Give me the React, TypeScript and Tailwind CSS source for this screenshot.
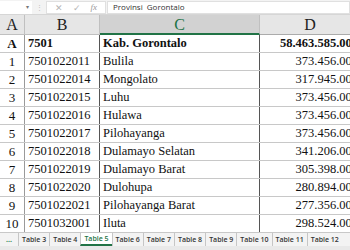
import React from "react";

const rows: [string, string, string, string][] = [
  ["1", "7501022011", "Bulila", "373.456.000"],
  ["2", "7501022014", "Mongolato", "317.945.000"],
  ["3", "7501022015", "Luhu", "373.456.000"],
  ["4", "7501022016", "Hulawa", "373.456.000"],
  ["5", "7501022017", "Pilohayanga", "373.456.000"],
  ["6", "7501022018", "Dulamayo Selatan", "341.206.000"],
  ["7", "7501022019", "Dulamayo Barat", "305.398.000"],
  ["8", "7501022020", "Dulohupa", "280.894.000"],
  ["9", "7501022021", "Pilohayanga Barat", "277.356.000"],
  ["10", "7501032001", "Iluta", "298.524.000"],
];

const tabs = ["Table 3", "Table 4", "Table 5", "Table 6", "Table 7", "Table 8", "Table 9", "Table 10", "Table 11", "Table 12"];

function Row({ a, b, c, d, bold }: { a: string; b: string; c: string; d: string; bold?: boolean }) {
  const w = bold ? "font-bold" : "";
  return (
    <div className={`flex h-[18px] border-b border-[#c8c8c8] text-[12.5px] leading-[17px] text-[#111] ${w}`}>
      <div className="w-[25px] shrink-0 text-center border-r border-[#9a9a9a] text-[13px]">{a}</div>
      <div className="w-[75px] shrink-0 pl-[3px] border-r border-[#555]">{b}</div>
      <div className="w-[160px] shrink-0 pl-[3px] border-r border-[#555]">{c}</div>
      <div className="w-[100px] shrink-0 pr-[2px] text-right">{d}</div>
    </div>
  );
}

export default function App() {
  return (
    <div className="w-[350px] h-[250px] overflow-hidden bg-white flex flex-col" style={{ fontFamily: '"Liberation Serif", serif' }}>
      {/* formula bar */}
      <div className="h-[15px] shrink-0 flex items-center bg-[#f3f3f3] border-b border-[#d6d6d6]" style={{ fontFamily: '"Open Sans", sans-serif' }}>
        <div className="w-[32px] h-[13px] bg-white flex items-center justify-end pr-[3px] text-[6px] text-[#777]">▾</div>
        <div className="w-[14px] flex justify-center text-[7px] text-[#bbb] leading-none">⋮</div>
        <div className="w-[60px] h-[13px] bg-white border border-[#e0e0e0] flex items-center justify-around px-[3px] text-[9px] text-[#b5b5b5] leading-none">
          <span>✕</span>
          <span>✓</span>
          <span className="italic text-[9px] text-[#999]" style={{ fontFamily: '"Liberation Serif", serif' }}>fx</span>
        </div>
        <div className="flex-1 h-[13px] bg-white border border-[#e0e0e0] ml-[1px] flex items-center pl-[5px] text-[8px] text-[#333] leading-none whitespace-pre">
          Provinsi  Gorontalo
        </div>
      </div>
      {/* column headers */}
      <div className="h-[20px] shrink-0 flex text-[16px] leading-[19px] text-[#222] bg-[#e6e6e6]">
        <div className="w-[25px] shrink-0 text-center border-r border-[#c0c0c0] border-b border-[#ababab]">A</div>
        <div className="w-[75px] shrink-0 text-center border-r border-[#c0c0c0] border-b border-[#ababab]">B</div>
        <div className="w-[160px] shrink-0 text-center bg-[#d2d2d2] text-[#217346] border-r border-[#c0c0c0] border-b-2 border-b-[#217346]">C</div>
        <div className="w-[100px] shrink-0 text-center border-b border-[#ababab]">D</div>
      </div>
      {/* data */}
      <div className="shrink-0">
        <Row a="A" b="7501" c="Kab.  Gorontalo" d="58.463.585.000" bold />
        {rows.map((r) => (
          <Row key={r[0]} a={r[0]} b={r[1]} c={r[2]} d={r[3]} />
        ))}
      </div>
      {/* tabs */}
      <div className="h-[13px] shrink-0 flex items-stretch bg-[#f3f3f3] text-[7px] font-semibold text-[#333] leading-none" style={{ fontFamily: '"Open Sans", sans-serif' }}>
        <div className="w-[18px] shrink-0 flex items-center justify-center text-[#217346] font-bold">...</div>
        {tabs.map((t) => (
          <div
            key={t}
            className={`shrink-0 flex items-center px-[3px] border-l border-[#c6c6c6] ${t === "Table 5" ? "bg-white text-[#217346] border-b-2 border-b-[#217346]" : ""}`}
          >
            {t}
          </div>
        ))}
      </div>
      <div className="flex-1 bg-[#e9e9e9]" />
    </div>
  );
}
